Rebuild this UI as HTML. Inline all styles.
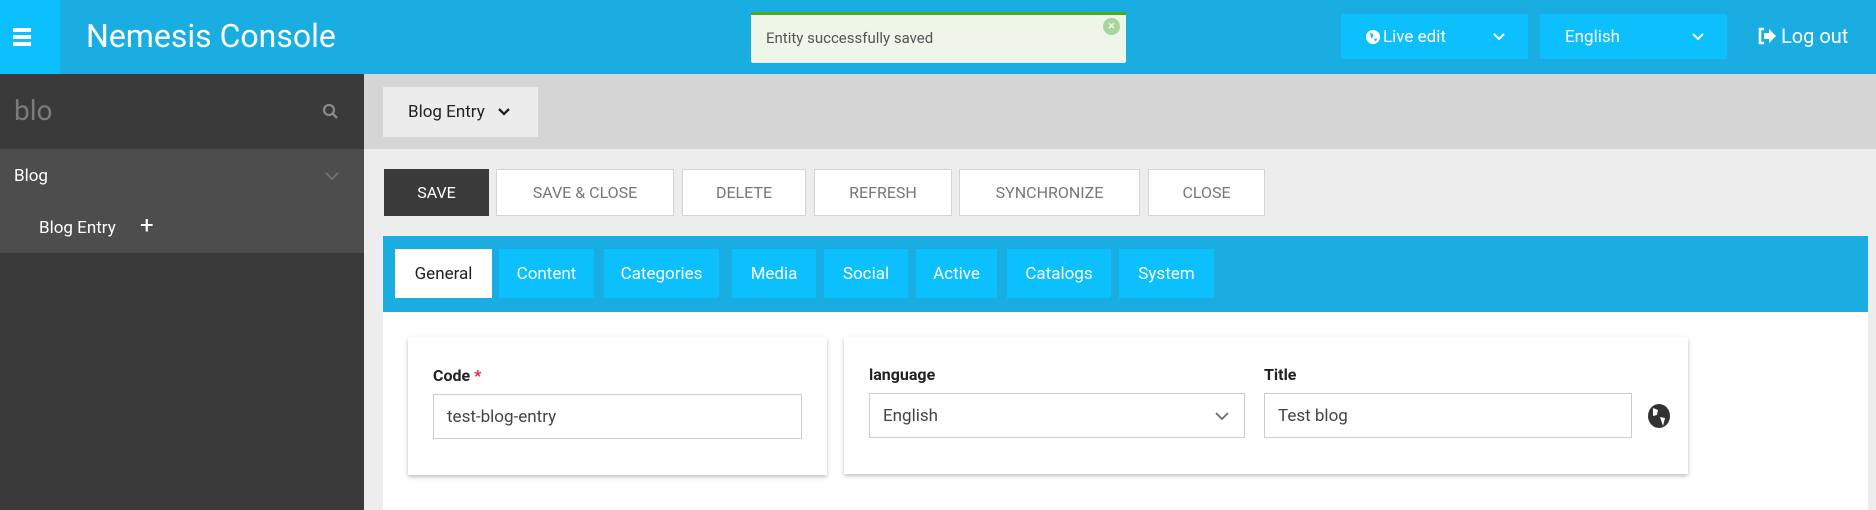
<!DOCTYPE html>
<html><head><style>
*{box-sizing:border-box;margin:0;padding:0}
body{width:1876px;height:510px;overflow:hidden;font-family:"Roboto","Liberation Sans",sans-serif;background:#ededed;position:relative}
.a{position:absolute}
.hdr{left:0;top:0;width:1876px;height:74px;background:#19ade2}
.btn{position:absolute;top:169px;height:47px;background:#fff;border:1px solid #d4d4d4;color:#777;font-size:16px;display:flex;align-items:center;justify-content:center}
.tab{position:absolute;top:249px;height:49px;background:#0bc0fd;color:#fff;font-size:17px;display:flex;align-items:center;justify-content:center}
.card{position:absolute;background:#fff;box-shadow:0 2px 4px rgba(0,0,0,.25)}
.lbl{position:absolute;font-weight:bold;font-size:16px;color:#222}
.inp{position:absolute;height:45px;border:1px solid #ccc;font-size:17px;color:#444;padding-left:13px;display:flex;align-items:center;background:#fff}
</style></head><body>
<div class="a hdr"></div>
<div class="a" style="left:0;top:0;width:60px;height:74px;background:#0bc0fd"></div>
<div class="a" style="left:13px;top:28px;width:18px;height:4px;background:#fff;box-shadow:0 7px 0 #fff,0 14px 0 #fff"></div>
<div class="a" style="left:86px;top:17px;color:#fff;font-size:32px">Nemesis Console</div>
<div class="a" style="left:751px;top:12px;width:375px;height:51px;background:#eef5e9;border-top:3px solid #4cae16;border-radius:2px"></div>
<div class="a" style="left:766px;top:29px;font-size:15px;color:#555">Entity successfully saved</div>
<div class="a" style="left:1103px;top:18px;width:17px;height:17px;border-radius:50%;background:#a8d59a;color:#eef5e9;font-size:13px;font-weight:bold;text-align:center;line-height:17px">×</div>
<div class="a" style="left:1341px;top:14px;width:187px;height:45px;background:#0bc0fd;color:#fff;font-size:17px;display:flex;align-items:center;padding-left:25px">
<svg width="14" height="14" viewBox="0 0 14 14" style="margin-right:3px"><circle cx="7" cy="7" r="7" fill="#fff"/><path d="M4 3l3 1 0 3-2 1zM8 9l3-1-1 4z" fill="#0bc0fd"/></svg>Live edit
<svg width="14" height="10" style="position:absolute;right:22px;top:18px"><path d="M2 2l5 5 5-5" stroke="#fff" stroke-width="2" fill="none"/></svg></div>
<div class="a" style="left:1540px;top:14px;width:187px;height:45px;background:#0bc0fd;color:#fff;font-size:17px;display:flex;align-items:center;padding-left:25px">English
<svg width="14" height="10" style="position:absolute;right:22px;top:18px"><path d="M2 2l5 5 5-5" stroke="#fff" stroke-width="2" fill="none"/></svg></div>
<div class="a" style="left:1757px;top:24px;color:#fff;font-size:20px;display:flex;align-items:center"><svg width="20" height="18" viewBox="0 0 20 18" style="margin-right:4px"><path d="M7 2H3v14h4" stroke="#fff" stroke-width="2.5" fill="none"/><path d="M7 6h5V2l7 7-7 7v-4H7z" fill="#fff"/></svg>Log out</div>

<div class="a" style="left:0;top:74px;width:364px;height:436px;background:#3a3a3a"></div>
<div class="a" style="left:14px;top:94px;color:#7b7b7b;font-size:28px">blo</div>
<svg class="a" style="left:322px;top:103px" width="16" height="16"><circle cx="7" cy="7" r="5" stroke="#888" stroke-width="2.3" fill="none"/><path d="M11 11l4 4" stroke="#888" stroke-width="2.5"/></svg>
<div class="a" style="left:0;top:149px;width:364px;height:104px;background:#4d4d4d"></div>
<div class="a" style="left:14px;top:166px;color:#fff;font-size:17px">Blog</div>
<svg class="a" style="left:325px;top:172px" width="14" height="10"><path d="M1 1l6 6 6-6" stroke="#777" stroke-width="1.6" fill="none"/></svg>
<div class="a" style="left:39px;top:218px;color:#fff;font-size:17px">Blog Entry</div>
<div class="a" style="left:140px;top:211px;color:#fff;font-size:24px">+</div>

<div class="a" style="left:364px;top:74px;width:1512px;height:75px;background:#d5d5d5"></div>
<div class="a" style="left:383px;top:87px;width:155px;height:50px;background:#ececec;font-size:17px;color:#222;display:flex;align-items:center;padding-left:25px">Blog Entry
<svg width="14" height="10" style="margin-left:12px"><path d="M2 2l5 5 5-5" stroke="#222" stroke-width="2.3" fill="none"/></svg></div>

<div class="btn" style="left:384px;width:105px;background:#3a3a3a;color:#fff;border-color:#3a3a3a">SAVE</div>
<div class="btn" style="left:496px;width:178px">SAVE &amp; CLOSE</div>
<div class="btn" style="left:682px;width:124px">DELETE</div>
<div class="btn" style="left:814px;width:138px">REFRESH</div>
<div class="btn" style="left:959px;width:181px">SYNCHRONIZE</div>
<div class="btn" style="left:1148px;width:117px">CLOSE</div>

<div class="a" style="left:383px;top:236px;width:1485px;height:76px;background:#19ade2"></div>
<div class="a" style="left:383px;top:312px;width:1485px;height:198px;background:#fff"></div>
<div class="tab" style="left:395px;width:97px;background:#fff;color:#222">General</div>
<div class="tab" style="left:499px;width:95px">Content</div>
<div class="tab" style="left:604px;width:115px">Categories</div>
<div class="tab" style="left:732px;width:84px">Media</div>
<div class="tab" style="left:824px;width:84px">Social</div>
<div class="tab" style="left:916px;width:81px">Active</div>
<div class="tab" style="left:1007px;width:104px">Catalogs</div>
<div class="tab" style="left:1119px;width:95px">System</div>

<div class="card" style="left:408px;top:337px;width:419px;height:138px"></div>
<div class="card" style="left:844px;top:337px;width:844px;height:137px"></div>
<div class="lbl" style="left:433px;top:366px">Code <span style="color:#e8194b">*</span></div>
<div class="inp" style="left:433px;top:394px;width:369px">test-blog-entry</div>
<div class="lbl" style="left:869px;top:365px">language</div>
<div class="inp" style="left:869px;top:393px;width:376px">English
<svg width="14" height="10" style="position:absolute;right:15px;top:18px"><path d="M1 1l6 6 6-6" stroke="#666" stroke-width="1.6" fill="none"/></svg></div>
<div class="lbl" style="left:1264px;top:365px">Title</div>
<div class="inp" style="left:1264px;top:393px;width:368px">Test blog</div>
<svg class="a" style="left:1647px;top:403px" width="24" height="26" viewBox="0 0 24 26"><ellipse cx="12" cy="13" rx="11" ry="12" fill="#333"/><path d="M6 5l5 2-1 5-4 1zM13 14l5 1-2 8z" fill="#fff"/></svg>
</body></html>
